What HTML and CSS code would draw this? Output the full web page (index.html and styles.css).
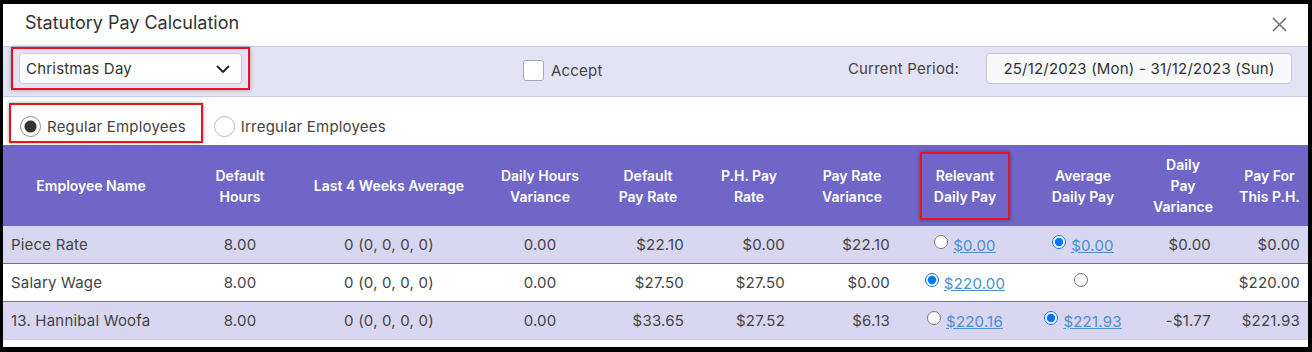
FILE: index.html
```html
<!DOCTYPE html>
<html lang="en">
<head>
  <meta charset="UTF-8">
  <title>Statutory Pay Calculation</title>
  <link rel="stylesheet" href="styles.css">
</head>
<body>

  <div class="dialog">

    <!-- Title bar -->
    <header class="dialog-header">
      <h1>Statutory Pay Calculation</h1>
      <svg class="close-btn" width="16" height="16" viewBox="0 0 16 16">
        <path d="M1 1L15 15M15 1L1 15" stroke="#666" stroke-width="1.5" fill="none"/>
      </svg>
    </header>

    <!-- Holiday / accept / period -->
    <div class="toolbar">
      <div class="highlight select-wrap">
        <div class="holiday-select">
          <span>Christmas Day</span>
          <svg width="14" height="8" viewBox="0 0 14 8">
            <path d="M1 1L7 7L13 1" stroke="#222" stroke-width="1.8" fill="none"/>
          </svg>
        </div>
      </div>
      <label class="accept"><input type="checkbox"> Accept</label>
      <div class="period">
        <span class="period-label">Current Period:</span>
        <div class="period-box">25/12/2023 (Mon) - 31/12/2023 (Sun)</div>
      </div>
    </div>

    <!-- Employee type -->
    <div class="type-row">
      <label class="type-option highlight"><input type="radio" name="etype" checked> Regular Employees</label>
      <label class="type-option"><input type="radio" name="etype"> Irregular Employees</label>
    </div>

    <table class="pay-table">
      <colgroup>
        <col style="width:176px"><col style="width:122px"><col style="width:176px">
        <col style="width:126px"><col style="width:90px"><col style="width:112px">
        <col style="width:94px"><col style="width:132px"><col style="width:104px">
        <col style="width:96px"><col>
      </colgroup>
      <thead>
        <tr>
          <th>Employee Name</th>
          <th>Default<br>Hours</th>
          <th>Last 4 Weeks Average</th>
          <th>Daily Hours<br>Variance</th>
          <th>Default<br>Pay Rate</th>
          <th>P.H. Pay<br>Rate</th>
          <th>Pay Rate<br>Variance</th>
          <th><span class="highlight th-mark">Relevant<br>Daily Pay</span></th>
          <th>Average<br>Daily Pay</th>
          <th>Daily<br>Pay<br>Variance</th>
          <th>Pay For<br>This P.H.</th>
        </tr>
      </thead>
      <tbody>
        <tr>
          <td class="name">Piece Rate</td>
          <td class="mid">8.00</td>
          <td class="mid">0 (0, 0, 0, 0)</td>
          <td class="mid">0.00</td>
          <td class="num">$22.10</td>
          <td class="num wide">$0.00</td>
          <td class="num">$22.10</td>
          <td class="mid"><input type="radio" name="p1"><a href="#">$0.00</a></td>
          <td class="mid"><input type="radio" name="p1" checked><a href="#">$0.00</a></td>
          <td class="num wide">$0.00</td>
          <td class="num">$0.00</td>
        </tr>
        <tr>
          <td class="name">Salary Wage</td>
          <td class="mid">8.00</td>
          <td class="mid">0 (0, 0, 0, 0)</td>
          <td class="mid">0.00</td>
          <td class="num">$27.50</td>
          <td class="num wide">$27.50</td>
          <td class="num">$0.00</td>
          <td class="mid"><input type="radio" name="p2" checked><a href="#">$220.00</a></td>
          <td class="mid"><input type="radio" name="p2"></td>
          <td class="num wide"></td>
          <td class="num">$220.00</td>
        </tr>
        <tr>
          <td class="name">13. Hannibal Woofa</td>
          <td class="mid">8.00</td>
          <td class="mid">0 (0, 0, 0, 0)</td>
          <td class="mid">0.00</td>
          <td class="num">$33.65</td>
          <td class="num wide">$27.52</td>
          <td class="num">$6.13</td>
          <td class="mid"><input type="radio" name="p3"><a href="#">$220.16</a></td>
          <td class="mid"><input type="radio" name="p3" checked><a href="#">$221.93</a></td>
          <td class="num wide">-$1.77</td>
          <td class="num">$221.93</td>
        </tr>
      </tbody>
    </table>

  </div>

</body>
</html>
```

FILE: styles.css
```css
/* Black frame round the dialog */
body {
  margin: 0;
  background: #000;
  font-family: Inter, "Noto Sans", sans-serif;
}

.dialog {
  margin: 4px 4px 5px 3px;
  height: 343px;
  background: #fff;
  overflow: hidden;
  letter-spacing: 0.2px;
}

/* Title bar */
.dialog-header {
  height: 42px;
  box-sizing: border-box;
  display: flex;
  align-items: center;
  justify-content: space-between;
  padding: 0 21px 5px 22px;
}
.dialog-header h1 {
  margin: 0;
  font-size: 18px;
  font-weight: 400;
  letter-spacing: 0;
  color: #333;
}
.close-btn {
  width: 15px;
  height: 15px;
  margin-top: 3px;
}

/* Red call-out boxes */
.highlight {
  border: 2px solid #e8141b;
  box-shadow: 0 0 4px rgba(0, 0, 0, 0.35);
}

/* Toolbar band */
.toolbar {
  height: 49px;
  display: flex;
  align-items: flex-start;
  padding: 0 16px 0 8px;
  background: #e4e2f5;
  border-top: 1px solid #cbc7e8;
  border-bottom: 1px solid #cbc7e8;
}
.select-wrap {
  padding: 4px 6px;
}
.holiday-select {
  display: flex;
  align-items: center;
  justify-content: space-between;
  padding: 0 11px 0 6px;
  box-sizing: border-box;
  width: 223px;
  height: 31px;
  background: #fff;
  border: 1px solid #c9c9d2;
  border-radius: 4px;
  font-size: 15px;
  color: #333;
}
.accept {
  display: flex;
  align-items: center;
  gap: 7px;
  margin: 13px 0 0 273px;
  font-size: 15px;
  color: #444;
}
.accept input {
  appearance: none;
  margin: 0;
  width: 21px;
  height: 21px;
  background: #fff;
  border: 1px solid #a9a6bb;
  border-radius: 3px;
}
.period {
  margin-left: auto;
  display: flex;
  align-items: center;
  gap: 27px;
  margin-top: 6px;
}
.period-label {
  font-size: 15px;
  color: #444;
}
.period-box {
  width: 306px;
  height: 31px;
  box-sizing: border-box;
  display: flex;
  align-items: center;
  justify-content: center;
  background: #f9f9fb;
  border: 1px solid #c6c6ce;
  border-radius: 4px;
  font-size: 15px;
  color: #333;
}

/* Regular / irregular choice */
.type-row {
  height: 48px;
  box-sizing: border-box;
  display: flex;
  align-items: flex-start;
  padding: 6px 0 0 6px;
}
.type-option {
  display: flex;
  align-items: center;
  gap: 6px;
  padding: 11px 15px 4px 9px;
  border: 2px solid transparent;
  font-size: 15px;
  color: #444;
}
.type-option.highlight {
  border-color: #e8141b;
}
.type-option input {
  appearance: none;
  margin: 0;
  width: 21px;
  height: 21px;
  border: 1px solid #b7b2d6;
  border-radius: 50%;
  background: #fff;
}
.type-option input:checked {
  border-color: #8d8d8d;
  background: radial-gradient(circle, #333 0 5.5px, #fff 6.5px);
}

/* Pay table */
.pay-table {
  width: 100%;
  table-layout: fixed;
  border-collapse: collapse;
  font-size: 15px;
  color: #444;
}
.pay-table th {
  height: 81px;
  padding: 0;
  background: #7066c8;
  color: #fff;
  font-size: 14px;
  font-weight: 600;
  line-height: 21px;
  letter-spacing: 0;
  text-align: center;
  vertical-align: middle;
}
.th-mark {
  display: inline-block;
  padding: 11px 12px;
}
.pay-table td {
  height: 37px;
  padding: 0;
  white-space: nowrap;
}
.pay-table tbody tr {
  border-bottom: 1px solid #7066c8;
}
.pay-table tbody tr:nth-child(odd) {
  background: #d9d6f1;
}
.pay-table tbody tr:last-child {
  border-bottom-color: #cfcbe8;
}
.pay-table td.name { padding-left: 8px; }
.pay-table td.mid { text-align: center; }
.pay-table td.num { text-align: right; padding-right: 9px; }
.pay-table td.num.wide { padding-right: 20px; }
.pay-table td:last-child { padding-right: 8px; }

.pay-table td input[type="radio"] {
  margin: 0 5px 0 0;
  width: 14px;
  height: 14px;
  vertical-align: 2px;
}
.pay-table td a {
  color: #4a8fd2;
  text-decoration: underline;
}
```
